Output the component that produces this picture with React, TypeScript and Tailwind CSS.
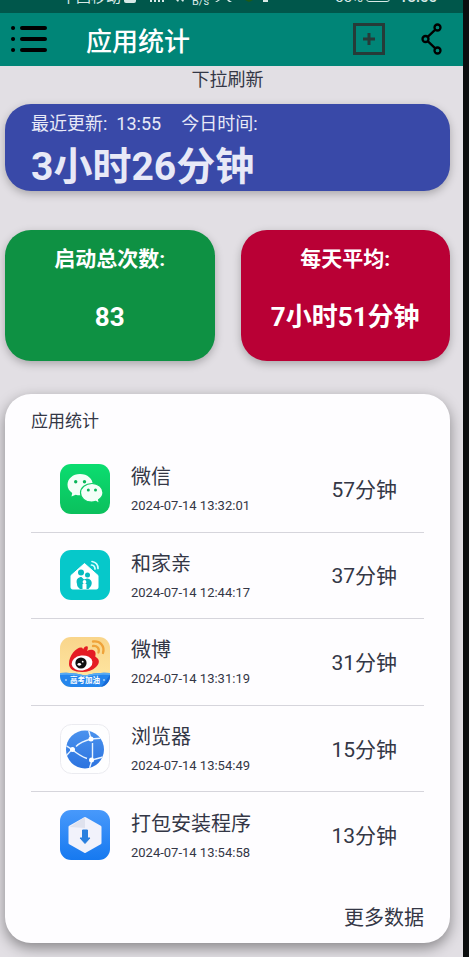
import React from "react";

type IconProps = { className?: string };

function WeChatIcon({ className }: IconProps) {
  return (
    <svg viewBox="0 0 50 50" className={className} aria-hidden="true">
      <defs>
        <linearGradient id="wechat" x1="0" y1="0" x2="0" y2="1">
          <stop offset="0" stopColor="#0bdd70" />
          <stop offset="1" stopColor="#0bc05d" />
        </linearGradient>
      </defs>
      <rect width="50" height="50" rx="11" fill="url(#wechat)" />
      <path d="M20 10C12.800 10 7.500 14.900 7.500 20.800C7.500 24.200 9.300 27.100 12.200 29L11.500 32.600L15.700 30.700Q18 31.500 21 31.300C28 31 32.800 26.500 32.800 20.800C32.800 14.900 27.500 10 20 10Z" fill="#f4fff8" />
      <path d="M32 19.500C25.500 19.500 20.500 23.500 20.500 28.800C20.500 34 25.300 38 31.500 38Q33.800 38 35.700 37.300L39.300 39.200L38.600 35.700C41.300 34 43 31.600 43 28.800C43 23.500 38.200 19.500 32 19.500Z" fill="#f4fff8" stroke="#0ccb65" strokeWidth="1.200" />
      <g fill="#0bb65a">
        <circle cx="15.700" cy="17.800" r="1.700" />
        <circle cx="24.500" cy="17.800" r="1.700" />
        <circle cx="28.300" cy="26" r="1.500" />
        <circle cx="35.500" cy="26" r="1.500" />
      </g>
    </svg>
  );
}

function HomeIcon({ className }: IconProps) {
  return (
    <svg viewBox="0 0 50 50" className={className} aria-hidden="true">
      <rect width="50" height="50" rx="11" fill="#06c8ca" />
      <path d="M24.500 13.500L11 25.500V37.500Q11 39 12.500 39H36.500Q38 39 38 37.500V25.500Z" fill="#fff" stroke="#fff" strokeLinejoin="round" />
      <g fill="#06bcc0">
        <circle cx="21" cy="22.500" r="3" />
        <circle cx="27.500" cy="25" r="2.500" />
        <path d="M17 34C15.500 29 18.500 27 21.500 27L24 29.500L27 28.500C31 29 33 32 31 36L28.500 39H20C18 37.500 17 36 17 34Z" />
      </g>
      <circle cx="24.500" cy="32" r="1.900" fill="#fff" />
      <path d="M22.500 34H26.500V39H22.500Z" fill="#fff" />
      <g fill="none" stroke="#d9ffff" strokeWidth="1.700" strokeLinecap="round">
        <path d="M32 11.500Q38 12.500 38 18.500" />
        <path d="M31.500 15Q35 15.500 35 19" />
      </g>
    </svg>
  );
}

function WeiboIcon({ className }: IconProps) {
  return (
    <svg viewBox="0 0 50 50" className={className} aria-hidden="true">
      <defs>
        <linearGradient id="weibo" x1="0" y1="0" x2="0" y2="1">
          <stop offset="0" stopColor="#f9d58b" />
          <stop offset="1" stopColor="#ffe9a5" />
        </linearGradient>
        <clipPath id="weiboClip">
          <rect width="50" height="50" rx="11" />
        </clipPath>
      </defs>
      <g clipPath="url(#weiboClip)">
        <rect width="50" height="50" fill="url(#weibo)" />
        <path d="M0 36Q14 35 25 38.500Q36 35 50 36V50H0Z" fill="#2586ed" />
        <path d="M0 36Q14 35 25 38.500Q36 35 50 36V38Q36 37 25 40Q14 37 0 38Z" fill="#57aaf4" />
        <path d="M41 50L50 38V50Z" fill="#1769d7" />
        <path d="M9 27C9 18.500 16 10.500 21 10.500C23 10.500 23 12.500 23 12.500C24 9.500 26.500 8.500 27.500 9.500C28.500 11 27 14 27 14C31 11.500 36.500 13 35.500 18C35 19.500 35.500 20 36.500 20.500C40 23 39.500 27 36 30C32.500 33.500 28 35 22 35C14 35 9 32 9 27Z" fill="#e51c23" />
        <ellipse cx="22" cy="26" rx="10.500" ry="7.500" fill="#fff" transform="rotate(-7 22 26)" />
        <circle cx="21" cy="26" r="5.600" fill="#111" />
        <ellipse cx="19.300" cy="27.300" rx="1.800" ry="1.400" fill="#fff" />
        <circle cx="22.700" cy="24.700" r=".9" fill="#fff" />
        <g fill="none" stroke="#efa33a" strokeWidth="2.300" strokeLinecap="round">
          <path d="M33 4.500C40 3.500 45 9 43 16" />
          <path d="M33 9C37 8.500 39.800 11.500 38.500 15.500" />
        </g>
        <text x="25" y="46" textAnchor="middle" fontSize="7.500" fontWeight="700" fontFamily="Noto Sans CJK SC, sans-serif" fill="#fff">高考加油</text>
        <circle cx="6" cy="43" r=".8" fill="#fff" />
        <circle cx="44" cy="43" r=".8" fill="#fff" />
      </g>
    </svg>
  );
}

function BrowserIcon({ className }: IconProps) {
  return (
    <svg viewBox="0 0 50 50" className={className} aria-hidden="true">
      <defs>
        <linearGradient id="browser" x1="0" y1="0" x2="0" y2="1">
          <stop offset="0" stopColor="#4a92ee" />
          <stop offset="1" stopColor="#2c73df" />
        </linearGradient>
        <clipPath id="browserClip">
          <circle cx="25" cy="25.500" r="19" />
        </clipPath>
      </defs>
      <rect x=".5" y=".5" width="49" height="49" rx="11" fill="#fefeff" stroke="#ebebf0" />
      <circle cx="25" cy="25.500" r="19" fill="url(#browser)" />
      <g clipPath="url(#browserClip)" fill="none" stroke="#e8f3ff" strokeWidth="1.400">
        <path d="M16 22.500Q21 17.500 31 15M32.500 19V35M27 34.500Q20 32 12 25.500" />
        <path d="M5 21L12 25.500L6 32M28 4L31 15L45 14M32 36L43 33M32 36L29 46" />
      </g>
      <g fill="#fff">
        <circle cx="12.500" cy="25.500" r="2.500" />
        <circle cx="31" cy="15" r="2.500" />
        <circle cx="31.500" cy="36" r="2.500" />
      </g>
    </svg>
  );
}

function InstallerIcon({ className }: IconProps) {
  return (
    <svg viewBox="0 0 50 50" className={className} aria-hidden="true">
      <defs>
        <linearGradient id="installer" x1="0" y1="0" x2="0" y2="1">
          <stop offset="0" stopColor="#4899fb" />
          <stop offset="1" stopColor="#1679f0" />
        </linearGradient>
      </defs>
      <rect width="50" height="50" rx="11" fill="url(#installer)" />
      <path d="M25 8.500L40 17V33L25 41.500L10 33V17Z" fill="#f1f2fb" stroke="#f1f2fb" strokeWidth="3" strokeLinejoin="round" />
      <path d="M25 7V18L9.500 17Z" fill="#dfe2ee" />
      <path d="M22.500 20H27.500V28H30L25 33.500L20 28H22.500Z" fill="#277fdf" stroke="#277fdf" strokeLinejoin="round" />
    </svg>
  );
}

const apps = [
  { name: "微信", time: "2024-07-14 13:32:01", duration: "57分钟", Icon: WeChatIcon },
  { name: "和家亲", time: "2024-07-14 12:44:17", duration: "37分钟", Icon: HomeIcon },
  { name: "微博", time: "2024-07-14 13:31:19", duration: "31分钟", Icon: WeiboIcon },
  { name: "浏览器", time: "2024-07-14 13:54:49", duration: "15分钟", Icon: BrowserIcon },
  { name: "打包安装程序", time: "2024-07-14 13:54:58", duration: "13分钟", Icon: InstallerIcon },
];

function StatusBar() {
  return (
    <div className="flex h-[13px] items-end overflow-hidden bg-[#00574b] pr-[26px] pb-[8px] pl-[61px] text-[15px] leading-4 text-[#d8e9e6]">
      <span className="shrink-0">中国移动</span>
      <svg width="24" height="13" viewBox="0 0 24 13" className="-mb-[8px] ml-[3px] shrink-0" fill="currentColor" aria-hidden="true">
        <path d="M0 0h12v1q0 2-2 2H2Q0 3 0 1z" />
      </svg>
      <svg width="44" height="13" viewBox="0 0 44 13" className="-mb-[8px] shrink-0" fill="currentColor" aria-hidden="true">
        <path d="M2 0h2v2H2zM6 0h2v2H6zM10 0h2v2h-2zM14 0h2v2h-2zM28 0h3l-1 2zM33 0h3l-1 2z" />
      </svg>
      <span className="-mb-[5px] shrink-0 text-[11px] leading-4">B/s</span>
      <svg width="66" height="13" viewBox="0 0 66 13" className="-mb-[8px] ml-[5px] shrink-0" fill="currentColor" aria-hidden="true">
        <path d="M1 2L4 0h2L3 2zM13 0h2l3 2h-3zM49 0h5v2h-5z" />
        <path d="M31 0h8l-4 2z" fill="#1d5a17" />
      </svg>
      <span className="ml-auto shrink-0">55%</span>
      <span className="mb-[3px] ml-[3px] h-4 w-6 shrink-0 rounded-[3px] border border-current" />
      <span className="ml-[9px] shrink-0 font-medium">13:55</span>
    </div>
  );
}

export default function App() {
  return (
    <div className="bg-[#0c0e0f] pr-[6px] font-[Roboto,'Noto_Sans_CJK_SC',sans-serif] text-[#343746]">
      <div className="bg-[#e2dfe4]">
        <StatusBar />
        <header className="flex h-[53px] items-center bg-[#008577] pr-[20px] pb-[2px] pl-[10px] text-black">
          <button type="button" aria-label="菜单">
            <svg width="38" height="30" viewBox="0 0 38 30" fill="none" stroke="currentColor" strokeWidth="4" strokeLinecap="round" className="block">
              <path d="M3 4h.1M3 15h.1M3 26h.1M12 4h23M12 15h23M12 26h23" />
            </svg>
          </button>
          <h1 className="ml-[38px] pt-1.5 text-[26px] leading-8 font-medium text-white">应用统计</h1>
          <button type="button" aria-label="添加" className="ml-auto text-[#263b38]">
            <svg width="32" height="32" viewBox="0 0 32 32" fill="none" stroke="currentColor" strokeWidth="3" className="block">
              <path d="M1.500 1.500h29v29h-29zM10 16h12M16 10v12" />
            </svg>
          </button>
          <button type="button" aria-label="分享" className="ml-[36px]">
            <svg width="22" height="32" viewBox="0 0 22 32" fill="none" stroke="currentColor" strokeWidth="2.300" className="block">
              <circle cx="16.500" cy="4.500" r="3" />
              <circle cx="4.500" cy="16" r="3" />
              <circle cx="16.500" cy="27.500" r="3" />
              <path d="M14.300 6.700L6.700 13.800M6.700 18.200L14.300 25.300" />
            </svg>
          </button>
        </header>

        <main className="pr-[13px] pb-[14px] pl-[5px]">
          <p className="h-[38px] text-center text-lg leading-7">下拉刷新</p>

          <section className="h-[87px] rounded-[26px] bg-[#3949a8] px-[26px] pt-[6px] text-[#e8e9f7] shadow-[0_3px_8px_rgba(0,0,0,0.25)]">
            <p className="flex gap-[9px] text-lg leading-7">
              <span>最近更新:</span>
              <span>13:55</span>
              <span className="ml-[11px]">今日时间:</span>
            </p>
            <p className="text-[39px] leading-[58px] font-bold">3小时26分钟</p>
          </section>

          <div className="mt-[39px] grid grid-cols-2 gap-[26px] text-center font-bold text-white">
            <section className="h-[131px] rounded-[26px] bg-[#0e9143] pt-[15px] shadow-[0_3px_8px_rgba(0,0,0,0.25)]">
              <h2 className="text-[21px] leading-7">启动总次数:</h2>
              <p className="mt-[26px] text-[26px] leading-9">83</p>
            </section>
            <section className="h-[131px] rounded-[26px] bg-[#b90035] pt-[15px] shadow-[0_3px_8px_rgba(0,0,0,0.25)]">
              <h2 className="text-[21px] leading-7">每天平均:</h2>
              <p className="mt-[26px] text-[26px] leading-9">7小时51分钟</p>
            </section>
          </div>

          <section className="mt-[33px] rounded-[26px] bg-[#fefdff] px-[26px] pt-[14px] pb-[5px] shadow-[0_5px_14px_rgba(0,0,0,0.4)]">
            <h2 className="h-[38px] text-[17px] leading-[26px]">应用统计</h2>
            <ul className="grid h-[433px] grid-rows-5">
              {apps.map(({ name, time, duration, Icon }) => (
                <li key={name} className="flex items-center border-b border-[#d6d5dc] pr-[27px] pl-[29px] last:border-transparent">
                  <Icon className="size-[50px] shrink-0" />
                  <div className="ml-[21px] pt-[6px]">
                    <h3 className="text-[20px] leading-7">{name}</h3>
                    <p className="mt-px text-[13px] leading-7">{time}</p>
                  </div>
                  <span className="ml-auto pt-0.5 text-[21px] leading-8">{duration}</span>
                </li>
              ))}
            </ul>
            <div className="mt-[19px] flex justify-end">
              <button type="button" className="text-[20px] leading-10">更多数据</button>
            </div>
          </section>
        </main>
      </div>
    </div>
  );
}
